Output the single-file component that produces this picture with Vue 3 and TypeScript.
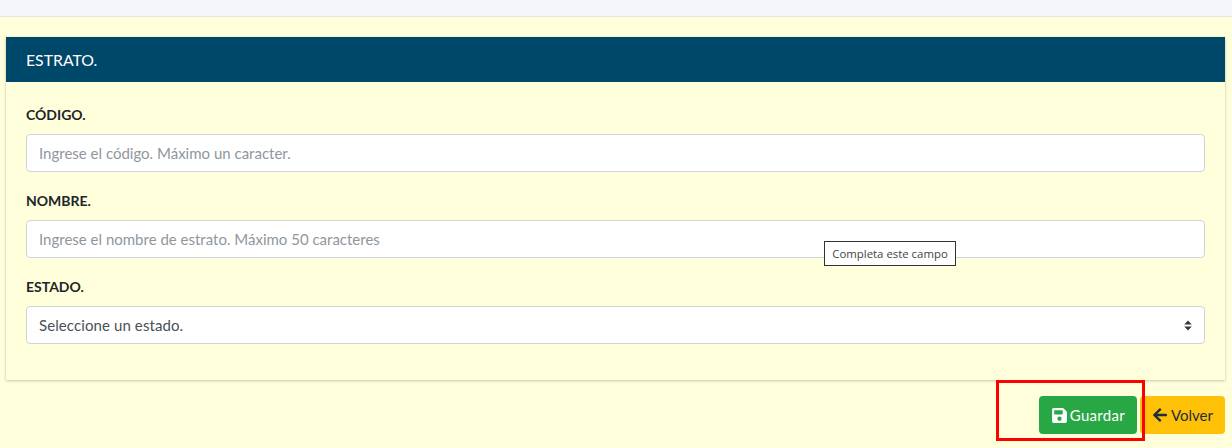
<script setup lang="ts">
import { ref } from 'vue';

interface Field {
  label: string;
  placeholder: string;
}

const fields = ref<Field[]>([
  { label: 'CÓDIGO.', placeholder: 'Ingrese el código. Máximo un caracter.' },
  { label: 'NOMBRE.', placeholder: 'Ingrese el nombre de estrato. Máximo 50 caracteres' },
]);
</script>

<template>
  <div class="page">
    <div class="topbar"></div>
    <main class="content">
      <section class="card">
        <header class="card-header">ESTRATO.</header>
        <div class="card-body">
          <div v-for="field in fields" :key="field.label" class="form-group">
            <label class="form-label">{{ field.label }}</label>
            <input class="form-control" type="text" :placeholder="field.placeholder" />
          </div>
          <div class="form-group">
            <label class="form-label">ESTADO.</label>
            <div class="form-control select-box">
              <span>Seleccione un estado.</span>
              <svg class="select-arrows" viewBox="0 0 8 11" width="8" height="11">
                <path d="M4 0.4 L7.8 4.4 H0.2 Z M4 10.6 L0.2 6.6 H7.8 Z" fill="#343a40" />
              </svg>
            </div>
          </div>
        </div>
      </section>
      <div class="actions">
        <button class="btn btn-success">
          <svg class="btn-icon" viewBox="0 0 448 512" width="15" height="17">
            <path fill="currentColor" d="M433.941 129.941l-83.882-83.882A48 48 0 0 0 316.118 32H48C21.49 32 0 53.49 0 80v352c0 26.51 21.49 48 48 48h352c26.51 0 48-21.49 48-48V163.882a48 48 0 0 0-14.059-33.941zM224 416c-35.346 0-64-28.654-64-64 0-35.346 28.654-64 64-64s64 28.654 64 64c0 35.346-28.654 64-64 64zm96-304.52V212c0 6.627-5.373 12-12 12H76c-6.627 0-12-5.373-12-12V108c0-6.627 5.373-12 12-12h228.52c3.183 0 6.235 1.264 8.485 3.515l3.48 3.48A11.996 11.996 0 0 1 320 111.48z" />
          </svg>
          <span class="btn-text">Guardar</span>
        </button>
        <button class="btn btn-warning">
          <svg class="btn-icon" viewBox="0 0 448 512" width="14" height="16">
            <path fill="currentColor" d="M257.5 445.1l-22.2 22.2c-9.4 9.4-24.6 9.4-33.9 0L7 273c-9.4-9.4-9.4-24.6 0-33.9L201.4 44.7c9.4-9.4 24.6-9.4 33.9 0l22.2 22.2c9.5 9.5 9.3 25-.4 34.3L136.6 216H424c13.3 0 24 10.7 24 24v32c0 13.3-10.7 24-24 24H136.6l120.5 114.8c9.8 9.3 10 24.8.4 34.3z" />
          </svg>
          <span>Volver</span>
        </button>
      </div>
    </main>
    <div class="tooltip">Completa este campo</div>
    <div class="highlight"></div>
  </div>
</template>

<style scoped>
.page {
  position: relative;
  width: 1232px;
  height: 448px;
  overflow: hidden;
  background: #ffffdc;
  font-family: "Lato", "Liberation Sans", sans-serif;
  font-size: 15px;
  color: #212529;
}

.topbar {
  height: 16px;
  background: #f4f6f9;
  border-bottom: 1px solid #e6e6df;
}

.content {
  padding: 20px 7px 0 6px;
}

.card {
  background: #ffffdc;
  box-shadow: 0 0 1px rgba(0, 0, 0, 0.125), 0 1px 3px rgba(0, 0, 0, 0.2);
}

.card-header {
  height: 45px;
  padding: 0 20px 1px;
  box-sizing: border-box;
  display: flex;
  align-items: center;
  background: #00486a;
  color: #fff;
  font-size: 15.8px;
}

.card-body {
  padding: 24px 20px 36px;
  display: flex;
  flex-direction: column;
  gap: 20px;
}

.form-group {
  display: flex;
  flex-direction: column;
  gap: 9px;
}

.form-label {
  height: 19px;
  line-height: 17px;
  font-weight: 700;
  font-size: 14px;
}

.form-control {
  box-sizing: border-box;
  width: 100%;
  height: 38px;
  padding: 0 12px;
  background: #fff;
  border: 1px solid #ced4da;
  border-radius: 4px;
  font: inherit;
  color: #495057;
  outline: none;
}

.form-control::placeholder {
  color: #8f979e;
  opacity: 1;
}

.select-box {
  display: flex;
  align-items: center;
  justify-content: space-between;
  letter-spacing: 0.1px;
}

.actions {
  display: flex;
  justify-content: flex-end;
  gap: 3px;
  margin-top: 16px;
}

.btn {
  box-sizing: border-box;
  height: 38px;
  padding: 0 12px 0 13px;
  display: inline-flex;
  align-items: center;
  justify-content: space-between;
  border: 0;
  border-radius: 4px;
  font: inherit;
  font-size: 15px;
}

.btn-text {
  letter-spacing: 0.3px;
}

.btn-success {
  width: 98px;
  background: #28a745;
  color: #fff;
}

.btn-warning {
  width: 85px;
  background: #ffc107;
  color: #1f2d3d;
}

.tooltip {
  position: absolute;
  left: 824px;
  top: 241px;
  box-sizing: border-box;
  width: 132px;
  height: 25px;
  display: flex;
  align-items: center;
  justify-content: center;
  background: #fff;
  border: 1px solid #333;
  font-family: "Open Sans", "Liberation Sans", sans-serif;
  font-size: 11.4px;
  color: #444;
}

.highlight {
  position: absolute;
  left: 996px;
  top: 380px;
  box-sizing: border-box;
  width: 149px;
  height: 61px;
  border: 3px solid #f00;
}
</style>
